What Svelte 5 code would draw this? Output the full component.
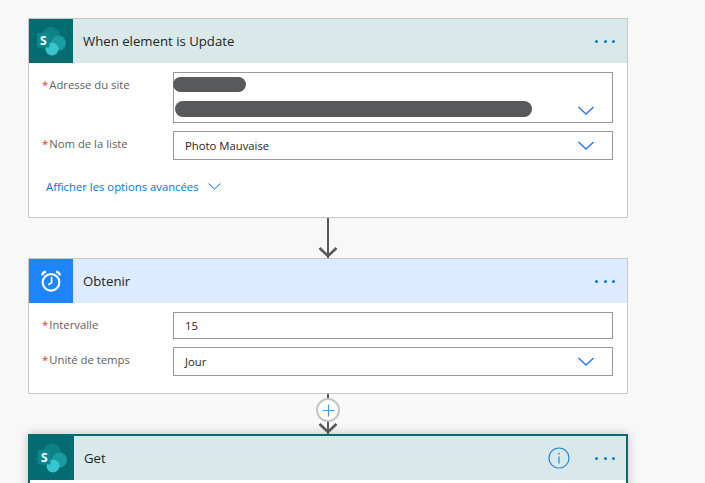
<script>
  const rows = { site: 'Adresse du site', list: 'Nom de la liste' };
</script>

{#snippet sharepoint()}
  <svg width="30" height="30" viewBox="0 0 30 30">
    <circle cx="15" cy="9.5" r="8.8" fill="#0e8186" />
    <circle cx="22.5" cy="17" r="7.5" fill="#1a9ba1" />
    <circle cx="16" cy="23" r="6.5" fill="#37c6d0" />
    <rect x="1" y="7" width="12.5" height="14.5" rx="1.2" fill="#0a8a8e" />
    <text x="7.2" y="18.6" class="s-letter">S</text>
  </svg>
{/snippet}

{#snippet chevron()}
  <svg class="chevron" width="16" height="9" viewBox="0 0 16 9">
    <path d="M0.5 1 L8 8 L15.5 1" fill="none" stroke="#2670ea" stroke-width="1.3" />
  </svg>
{/snippet}

{#snippet dots()}
  <div class="dots"><span></span><span></span><span></span></div>
{/snippet}

{#snippet arrow()}
  <svg class="arrow-head" width="20" height="12" viewBox="0 0 20 12">
    <path d="M1.5 2 L10 10 L18.5 2" fill="none" stroke="#585858" stroke-width="2.6" />
  </svg>
{/snippet}

<main class="canvas">
  <section class="card">
    <header class="head teal">
      <div class="icon icon-teal">{@render sharepoint()}</div>
      <h2>When element is Update</h2>
      {@render dots()}
    </header>
    <div class="body">
      <div class="row">
        <span class="label"><i>*</i>{rows.site}</span>
        <div class="field tall">
          <span class="blob blob-short"></span>
          <span class="blob blob-long"></span>
          {@render chevron()}
        </div>
      </div>
      <div class="row">
        <span class="label"><i>*</i>{rows.list}</span>
        <div class="field">Photo Mauvaise {@render chevron()}</div>
      </div>
      <div class="advanced">
        Afficher les options avancées
        <svg width="13" height="7" viewBox="0 0 13 7">
          <path d="M0.5 0.5 L6.5 6 L12.5 0.5" fill="none" stroke="#0078d4" stroke-width="1" />
        </svg>
      </div>
    </div>
  </section>

  <div class="link">
    <span class="stem"></span>
    {@render arrow()}
  </div>

  <section class="card">
    <header class="head blue">
      <div class="icon icon-blue">
        <svg width="24" height="24" viewBox="0 0 24 24" fill="none" stroke="#fff">
          <circle cx="12" cy="13.4" r="8.3" stroke-width="2.2" />
          <path d="M12.6 8 V13.8 L9.4 15.8" stroke-width="1.7" />
          <path d="M3 6.4 Q3.6 3.2 7 2.6 M21 6.4 Q20.4 3.2 17 2.6" stroke-width="2.2" />
        </svg>
      </div>
      <h2>Obtenir</h2>
      {@render dots()}
    </header>
    <div class="body body-tight">
      <div class="row">
        <span class="label"><i>*</i>Intervalle</span>
        <div class="field short">15</div>
      </div>
      <div class="row">
        <span class="label"><i>*</i>Unité de temps</span>
        <div class="field">Jour {@render chevron()}</div>
      </div>
    </div>
  </section>

  <div class="link">
    <span class="stem"></span>
    <span class="plus">
      <svg width="13" height="13" viewBox="0 0 13 13">
        <path d="M6.5 0.5 V12.5 M0.5 6.5 H12.5" stroke="#3f9ae6" stroke-width="1.2" />
      </svg>
    </span>
    {@render arrow()}
  </div>

  <section class="card selected">
    <header class="head teal">
      <div class="icon icon-teal">{@render sharepoint()}</div>
      <h2>Get</h2>
      <svg class="info" width="22" height="22" viewBox="0 0 22 22" fill="none" stroke="#1e88d8">
        <circle cx="11" cy="11" r="10" stroke-width="1.2" />
        <path d="M11 9.5 V16.5" stroke-width="1.2" />
        <circle cx="11" cy="6.6" r="0.9" fill="#1e88d8" stroke="none" />
      </svg>
      {@render dots()}
    </header>
    <div class="body body-tight"></div>
  </section>
</main>

<style>
  :global(body) {
    background: #f8f8f8;
  }

  .canvas {
    display: flex;
    flex-direction: column;
    height: 483px;
    overflow: hidden;
    box-sizing: border-box;
    padding: 18px 0 0 28px;
    width: 705px;
    font-family: "Open Sans", "Noto Sans", sans-serif;
    color: #252423;
  }

  .card {
    flex: none;
    width: 600px;
    box-sizing: border-box;
    background: #fff;
    border: 1px solid #c8c8c8;
  }

  .selected {
    border: 2px solid #036c70;
    box-shadow: 0 0 10px rgba(0, 0, 0, 0.22);
  }

  .head {
    display: flex;
    align-items: center;
    height: 44px;
  }

  .teal {
    background: #d9e8e9;
  }

  .blue {
    background: #dcebff;
  }

  .icon {
    flex: none;
    display: flex;
    align-items: center;
    justify-content: center;
    width: 44px;
    height: 44px;
  }

  .icon-teal {
    background: #036c70;
  }

  .icon-blue {
    background: #1f85ff;
  }

  .s-letter {
    fill: #fff;
    font-family: "Open Sans", sans-serif;
    font-size: 12px;
    font-weight: 700;
    text-anchor: middle;
  }

  h2 {
    flex: 1;
    margin: 0 0 0 10px;
    font-size: 13.2px;
    font-weight: 400;
  }

  .dots {
    display: flex;
    gap: 5.5px;
    margin-right: 12px;
  }

  .selected .dots {
    margin-right: 11px;
  }

  .dots span {
    width: 3px;
    height: 3px;
    border-radius: 50%;
    background: #0078d4;
  }

  .info {
    margin-right: 25px;
  }

  .body {
    display: flex;
    flex-direction: column;
    gap: 8px;
    height: 154px;
    box-sizing: border-box;
    padding: 9px 14px 0 13px;
  }

  .body-tight {
    height: 90px;
  }

  .row {
    display: flex;
    justify-content: space-between;
  }

  .label {
    padding-top: 5px;
    font-size: 11.3px;
    color: #605e5c;
  }

  .label i {
    margin-right: 1px;
    font-style: normal;
    color: #d13438;
  }

  .field {
    position: relative;
    display: flex;
    align-items: center;
    justify-content: space-between;
    width: 440px;
    height: 29px;
    box-sizing: border-box;
    padding: 0 18px 0 11px;
    background: #fff;
    border: 1px solid #989898;
    font-size: 11.3px;
  }

  .field.tall {
    height: 51px;
  }

  .field.tall .chevron {
    position: absolute;
    right: 18px;
    bottom: 7px;
  }

  .field.short {
    height: 27px;
  }

  .blob {
    position: absolute;
    height: 15px;
    border-radius: 8px;
    background: #58595b;
  }

  .blob-short {
    top: 4px;
    left: -1px;
    width: 73px;
  }

  .blob-long {
    top: 28px;
    left: 1px;
    width: 357px;
    height: 16px;
  }

  .advanced {
    display: flex;
    align-items: center;
    gap: 9px;
    margin: 11px 0 0 4px;
    font-size: 11.3px;
    color: #0078d4;
  }

  .link {
    position: relative;
    flex: none;
    display: flex;
    flex-direction: column;
    align-items: center;
    width: 600px;
    height: 40px;
  }

  .stem {
    width: 2px;
    flex: 1;
    background: #585858;
  }

  .arrow-head {
    position: absolute;
    bottom: 0;
    left: 290px;
  }

  .plus {
    position: absolute;
    top: 4px;
    left: 288px;
    display: flex;
    align-items: center;
    justify-content: center;
    width: 24px;
    height: 24px;
    box-sizing: border-box;
    background: #fff;
    border: 2px solid #c4c4c4;
    border-radius: 50%;
  }
</style>
